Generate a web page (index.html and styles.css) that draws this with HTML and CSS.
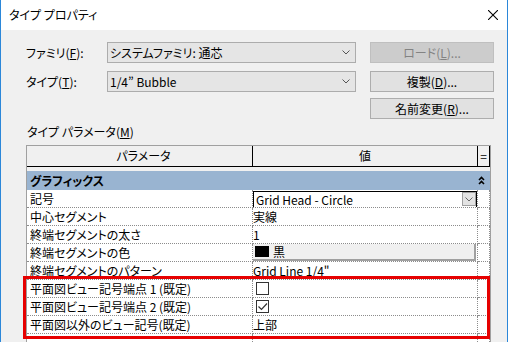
FILE: index.html
```html
<!DOCTYPE html>
<html lang="ja">
<head>
    <meta charset="UTF-8">
    <title>タイプ プロパティ</title>
    <link rel="stylesheet" href="styles.css">
</head>
<body>
    <div class="window">
        <div class="titlebar">
            <span class="title">タイプ プロパティ</span>
            <svg class="close" width="10" height="10" viewBox="0 0 10 10"><path d="M0 0L10 10M10 0L0 10" stroke="#000" stroke-width="1.1"/></svg>
        </div>
        <div class="content">
            <div class="top">
                <div class="fields">
                    <div class="field">
                        <span class="label">ファミリ(<u>F</u>):</span>
                        <div class="select">
                            <span>システムファミリ: 通芯</span>
                            <svg width="8" height="5" viewBox="0 0 8 5"><path d="M0.5 0.5L4 4L7.5 0.5" fill="none" stroke="#555"/></svg>
                        </div>
                    </div>
                    <div class="field">
                        <span class="label">タイプ(<u>T</u>):</span>
                        <div class="select">
                            <span>1/4” Bubble</span>
                            <svg width="8" height="5" viewBox="0 0 8 5"><path d="M0.5 0.5L4 4L7.5 0.5" fill="none" stroke="#555"/></svg>
                        </div>
                    </div>
                </div>
                <div class="buttons">
                    <button class="btn" disabled>ロード(<u>L</u>)...</button>
                    <button class="btn">複製(<u>D</u>)...</button>
                    <button class="btn btn-rename">名前変更(<u>R</u>)...</button>
                </div>
            </div>

            <div class="section-label">タイプ パラメータ(<u>M</u>)</div>

            <div class="grid">
                <div class="row head">
                    <div class="cell">パラメータ</div>
                    <div class="cell">値</div>
                    <div class="cell">=</div>
                </div>
                <div class="spacer"></div>
                <div class="group">
                    <span>グラフィックス</span>
                    <svg class="collapse" width="7" height="9" viewBox="0 0 7 9"><path d="M1 4L3.5 1.5L6 4M1 8L3.5 5.5L6 8" fill="none" stroke="#000" stroke-width="1.6"/></svg>
                </div>
                <div class="row">
                    <div class="cell">記号</div>
                    <div class="cell">
                        <div class="dropdown">
                            <span>Grid Head - Circle</span>
                            <span class="drop-btn"><svg width="8" height="5" viewBox="0 0 8 5"><path d="M0.5 0.5L4 4L7.5 0.5" fill="none" stroke="#666"/></svg></span>
                        </div>
                    </div>
                    <div class="cell"></div>
                </div>
                <div class="row">
                    <div class="cell">中心セグメント</div>
                    <div class="cell">実線</div>
                    <div class="cell"></div>
                </div>
                <div class="row">
                    <div class="cell">終端セグメントの太さ</div>
                    <div class="cell">1</div>
                    <div class="cell"></div>
                </div>
                <div class="row">
                    <div class="cell">終端セグメントの色</div>
                    <div class="cell">
                        <div class="color-btn"><span class="swatch"></span>黒</div>
                    </div>
                    <div class="cell"></div>
                </div>
                <div class="row">
                    <div class="cell">終端セグメントのパターン</div>
                    <div class="cell">Grid Line 1/4"</div>
                    <div class="cell"></div>
                </div>
                <div class="row">
                    <div class="cell">平面図ビュー記号端点 1 (既定)</div>
                    <div class="cell"><span class="checkbox"></span></div>
                    <div class="cell"></div>
                </div>
                <div class="row">
                    <div class="cell">平面図ビュー記号端点 2 (既定)</div>
                    <div class="cell">
                        <span class="checkbox"><svg width="11" height="11" viewBox="0 0 11 11"><path d="M1.5 5.5L4.5 8.5L10 2.5" fill="none" stroke="#333" stroke-width="1.2"/></svg></span>
                    </div>
                    <div class="cell"></div>
                </div>
                <div class="row">
                    <div class="cell">平面図以外のビュー記号(既定)</div>
                    <div class="cell">上部</div>
                    <div class="cell"></div>
                </div>
                <div class="row filler">
                    <div class="cell"></div>
                    <div class="cell"></div>
                    <div class="cell"></div>
                </div>
            </div>

            <div class="highlight"></div>
        </div>
    </div>
</body>
</html>
```

FILE: styles.css
```css
body {
    margin: 0;
    font-family: "Noto Sans CJK JP", "Liberation Sans", sans-serif;
    font-size: 12px;
    font-feature-settings: "palt";
    color: #000;
    background-color: #f0f0f0;
}

.window {
    width: 508px;
    height: 342px;
    box-sizing: border-box;
    border-left: 1px solid #2b87d9;
    border-right: 1px solid #2b87d9;
    overflow: hidden;
    background-color: #f0f0f0;
}

.titlebar {
    height: 30px;
    background-color: white;
    display: flex;
    align-items: center;
    justify-content: space-between;
    padding: 0 9px 0 8px;
}

.title {
    line-height: 16px;
    margin-top: -1px;
}

.close {
    display: block;
}

.content {
    position: relative;
    height: 312px;
    padding: 12px 0 0 25px;
    box-sizing: border-box;
}

.top {
    display: flex;
}

.fields {
    display: flex;
    flex-direction: column;
    gap: 8px;
}

.field {
    display: flex;
    align-items: center;
}

.label {
    width: 81px;
}

.select {
    width: 249px;
    height: 21px;
    box-sizing: border-box;
    background-color: #e5e5e5;
    border: 1px solid #acacac;
    display: flex;
    align-items: center;
    justify-content: space-between;
    padding: 0 5px 0 2px;
}

.buttons {
    display: flex;
    flex-direction: column;
    gap: 8px;
    margin-left: 14px;
}

.btn {
    width: 124px;
    height: 21px;
    box-sizing: border-box;
    background-color: #e1e1e1;
    border: 1px solid #adadad;
    font-family: inherit;
    font-size: 12px;
    font-feature-settings: "palt";
    color: #000;
    padding: 0;
}

.btn:disabled {
    background-color: #cccccc;
    border-color: #bfbfbf;
    color: #838383;
}

.btn-rename {
    margin-top: -2px;
}

.section-label {
    line-height: 16px;
    margin: 5px 0 5px 1px;
}

.grid {
    width: 465px;
    box-sizing: border-box;
    border: 1px solid #a0a0a0;
    border-bottom: none;
    background-color: white;
}

.row {
    display: grid;
    grid-template-columns: 226px 225px 12px;
    height: 18px;
}

.row .cell {
    border-right: 1px dotted #8c8c8c;
    border-bottom: 1px dotted #8c8c8c;
    padding-left: 3px;
    line-height: 17px;
    white-space: nowrap;
    overflow: hidden;
    display: flex;
    align-items: center;
}

.row .cell:nth-child(2) {
    padding-left: 0;
}

.row.head {
    height: 21px;
    background-color: #f0f0f0;
}

.row.head .cell {
    border-right: 1px solid #000;
    border-bottom: 1px solid #000;
    justify-content: center;
    padding: 0;
    line-height: 20px;
}

.row.head .cell:first-child {
    padding-left: 8px;
}

.spacer {
    height: 4px;
    background-color: #f0f0f0;
    width: 463px;
}

.group {
    width: 463px;
    height: 19px;
    background-color: #99b4d1;
    display: flex;
    align-items: center;
    justify-content: space-between;
    padding: 0 5px 0 3px;
    box-sizing: border-box;
    font-weight: bold;
}

.dropdown {
    width: 224px;
    height: 17px;
    box-sizing: border-box;
    border: 1px solid #000;
    display: flex;
    align-items: center;
    justify-content: space-between;
    padding-left: 2px;
    margin-top: 1px;
}

.drop-btn {
    width: 14px;
    height: 14px;
    box-sizing: border-box;
    background-color: #e3e3e3;
    border: 1px solid #a0a0a0;
    display: flex;
    align-items: center;
    justify-content: center;
}

.color-btn {
    width: 223px;
    height: 17px;
    box-sizing: border-box;
    background-color: #f0f0f0;
    border-right: 2px solid #a0a0a0;
    border-bottom: 2px solid #a0a0a0;
    display: flex;
    align-items: center;
    padding-left: 2px;
    gap: 4px;
}

.swatch {
    width: 14px;
    height: 11px;
    background-color: #000;
}

.checkbox {
    width: 13px;
    height: 13px;
    box-sizing: border-box;
    border: 1px solid #333;
    background-color: white;
    margin-left: 3px;
    display: flex;
    align-items: center;
    justify-content: center;
}

.checkbox svg {
    display: block;
}

.row.filler {
    height: 30px;
}

.row.filler .cell {
    border-bottom: none;
}

.highlight {
    position: absolute;
    left: 22px;
    top: 246px;
    width: 467px;
    height: 63px;
    box-sizing: border-box;
    border: 3px solid #e60000;
}
```
